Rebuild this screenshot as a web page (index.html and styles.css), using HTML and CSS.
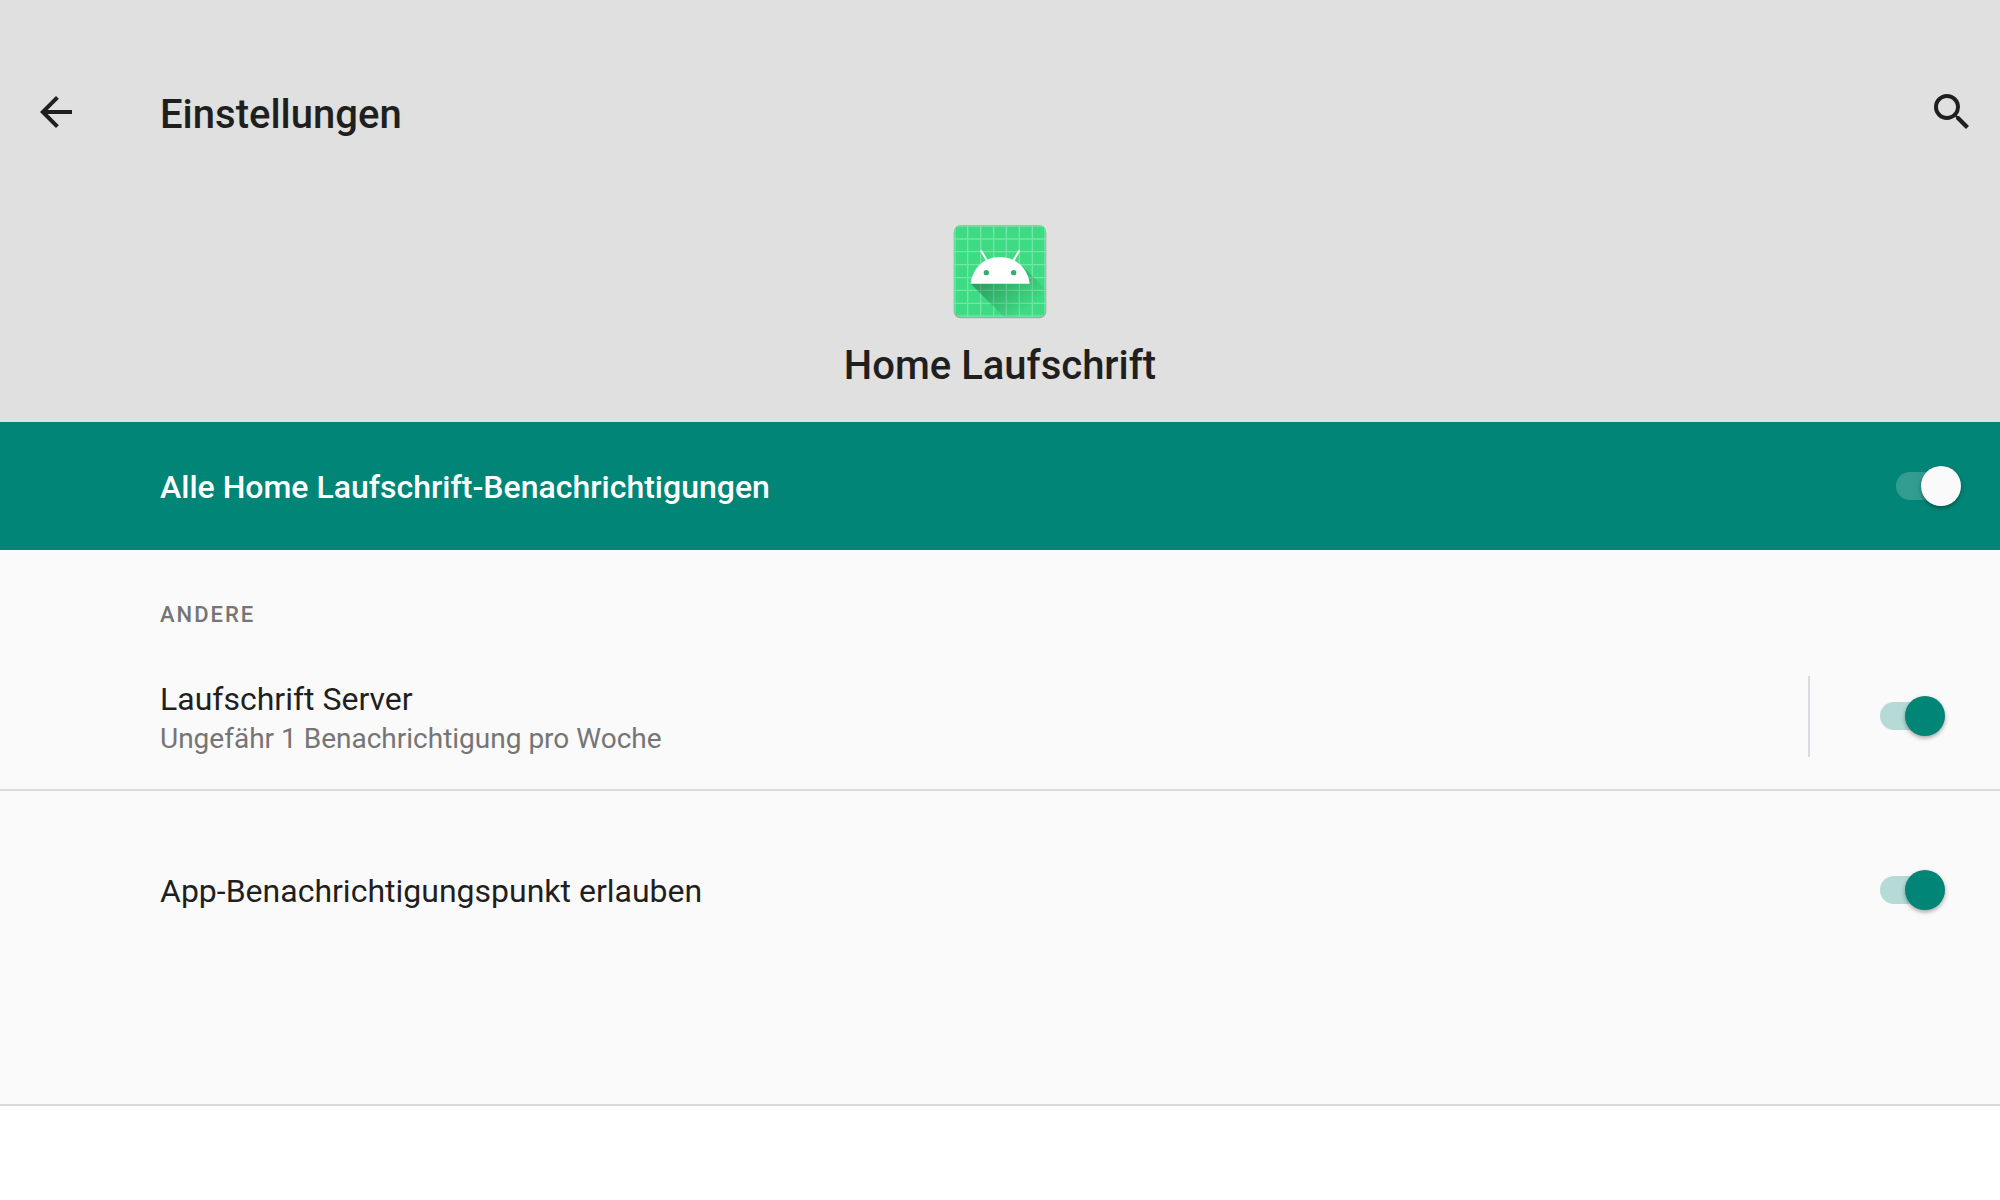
FILE: index.html
```html
<!DOCTYPE html>
<html lang="de">
<head>
  <meta charset="UTF-8" />
  <meta name="viewport" content="width=device-width, initial-scale=1.0" />
  <title>Einstellungen</title>
  <link rel="stylesheet" href="styles.css">
</head>
<body>
  <header class="header">
    <div class="toolbar">
      <button type="button" class="icon-button" aria-label="Zurück">
        <svg viewBox="0 0 24 24"><path d="M20 11H7.83l5.59-5.59L12 4l-8 8 8 8 1.41-1.41L7.83 13H20v-2z"/></svg>
      </button>
      <h1 class="title">Einstellungen</h1>
      <button type="button" class="icon-button" aria-label="Suchen">
        <svg viewBox="0 0 24 24"><path d="M15.5 14h-.79l-.28-.27A6.471 6.471 0 0 0 16 9.5 6.5 6.5 0 1 0 9.5 16c1.61 0 3.09-.59 4.23-1.57l.27.28v.79l5 4.99L20.49 19l-4.99-5zm-6 0C7.01 14 5 11.99 5 9.5S7.01 5 9.5 5 14 7.01 14 9.5 11.99 14 9.5 14z"/></svg>
      </button>
    </div>
    <div class="app">
      <svg class="app-icon" viewBox="36 39 288 288">
        <defs>
          <linearGradient id="schatten" gradientUnits="userSpaceOnUse" x1="160" y1="200" x2="250" y2="310">
            <stop offset="0" stop-color="#000" stop-opacity=".26"/>
            <stop offset="1" stop-color="#000" stop-opacity="0"/>
          </linearGradient>
          <clipPath id="flaeche"><rect x="42" y="45" width="276" height="276" rx="20"/></clipPath>
        </defs>
        <rect x="41" y="48" width="278" height="277" rx="21" fill="#000" opacity=".25"/>
        <g clip-path="url(#flaeche)">
          <rect x="42" y="45" width="276" height="276" fill="#3ddc84"/>
          <path d="M45 45v276M83 45v276M122 45v276M161 45v276M199 45v276M238 45v276M277 45v276M315 45v276M42 48h276M42 87h276M42 125h276M42 164h276M42 203h276M42 241h276M42 280h276M42 318h276" stroke="#fff" stroke-opacity=".28" stroke-width="4"/>
          <path d="M92 221L192 321H318V239L249 170z" fill="url(#schatten)"/>
        </g>
        <path d="M124 123l16 28M237 123l-16 28" stroke="#fff" stroke-width="6" stroke-linecap="round"/>
        <path d="M92 221C97 174 133 141 180 141S264 174 269 221z" fill="#fff"/>
        <circle cx="139" cy="188" r="8" fill="#34ad6c"/>
        <circle cx="221" cy="188" r="8" fill="#34ad6c"/>
      </svg>
      <h2 class="title">Home Laufschrift</h2>
    </div>
  </header>

  <div class="row banner">
    <label class="label" for="alle">Alle Home Laufschrift-Benachrichtigungen</label>
    <input type="checkbox" role="switch" class="switch light" id="alle" checked />
  </div>

  <main class="content">
    <section class="group">
      <h3 class="category">Andere</h3>
      <div class="row">
        <div class="text">
          <label class="label" for="server">Laufschrift Server</label>
          <p class="summary">Ungefähr 1 Benachrichtigung pro Woche</p>
        </div>
        <div class="widget">
          <input type="checkbox" role="switch" class="switch" id="server" checked />
        </div>
      </div>
    </section>
    <section class="group last">
      <div class="row">
        <label class="label" for="punkt">App-Benachrichtigungspunkt erlauben</label>
        <input type="checkbox" role="switch" class="switch" id="punkt" checked />
      </div>
    </section>
  </main>
</body>
</html>
```
FILE: styles.css
```css
* {
  box-sizing: border-box;
}
body {
  margin: 0;
  font-family: Roboto, sans-serif;
  background: #fff;
  color: #1f1f1f;
}
h1, h2, h3, p {
  margin: 0;
}
.header {
  background: #e0e0e0;
  padding: 56px 0 32px;
}
.toolbar {
  display: flex;
  align-items: center;
  height: 112px;
  padding: 0 24px 0 32px;
}
.toolbar .title {
  flex: 1;
  padding: 6px 0 0 80px;
}
.title {
  font-size: 40px;
  line-height: 48px;
  font-weight: 500;
}
.icon-button {
  width: 48px;
  height: 48px;
  padding: 0;
  border: 0;
  background: none;
  cursor: pointer;
}
.icon-button svg {
  display: block;
  fill: #1f1f1f;
}
.app {
  display: flex;
  flex-direction: column;
  align-items: center;
  gap: 23px;
  padding-top: 55px;
}
.app-icon {
  width: 96px;
  height: 96px;
}
.row {
  display: flex;
  align-items: center;
  justify-content: space-between;
  min-height: 146px;
  padding: 0 54px 0 160px;
}
.banner {
  min-height: 128px;
  padding-right: 38px;
  background: #008577;
  color: #fff;
}
.text {
  padding-top: 4px;
}
.label {
  display: block;
  padding-top: 2px;
  font-size: 32px;
  line-height: 40px;
}
.banner .label {
  font-weight: 500;
}
.content {
  background: #fafafa;
}
.group {
  border-bottom: 2px solid #dadae0;
}
.last {
  padding: 26px 0 141px;
  border-color: #dadada;
}
.category {
  padding: 49px 160px 12px;
  font-size: 22px;
  line-height: 32px;
  font-weight: 500;
  letter-spacing: 2px;
  text-transform: uppercase;
  color: #757575;
}
.summary {
  font-size: 28px;
  line-height: 40px;
  color: #757575;
}
.widget {
  display: flex;
  align-items: center;
  height: 81px;
  padding-left: 70px;
  border-left: 2px solid #dadae0;
}

/* Schalter */
.switch {
  appearance: none;
  position: relative;
  flex: none;
  width: 66px;
  height: 40px;
  margin: 0;
  color: #008577;
  cursor: pointer;
}
.switch::before {
  content: "";
  position: absolute;
  top: 6px;
  left: 0;
  width: 60px;
  height: 28px;
  border-radius: 14px;
  background: currentColor;
  opacity: 0.27;
}
.switch::after {
  content: "";
  position: absolute;
  top: 0;
  left: 0;
  width: 40px;
  height: 40px;
  border-radius: 50%;
  background: currentColor;
  box-shadow: 0 2px 4px rgba(0, 0, 0, 0.35);
}
.switch:checked::after {
  left: 25px;
}
.light {
  color: #fafafa;
}
.light::before {
  opacity: 0.2;
}
```
